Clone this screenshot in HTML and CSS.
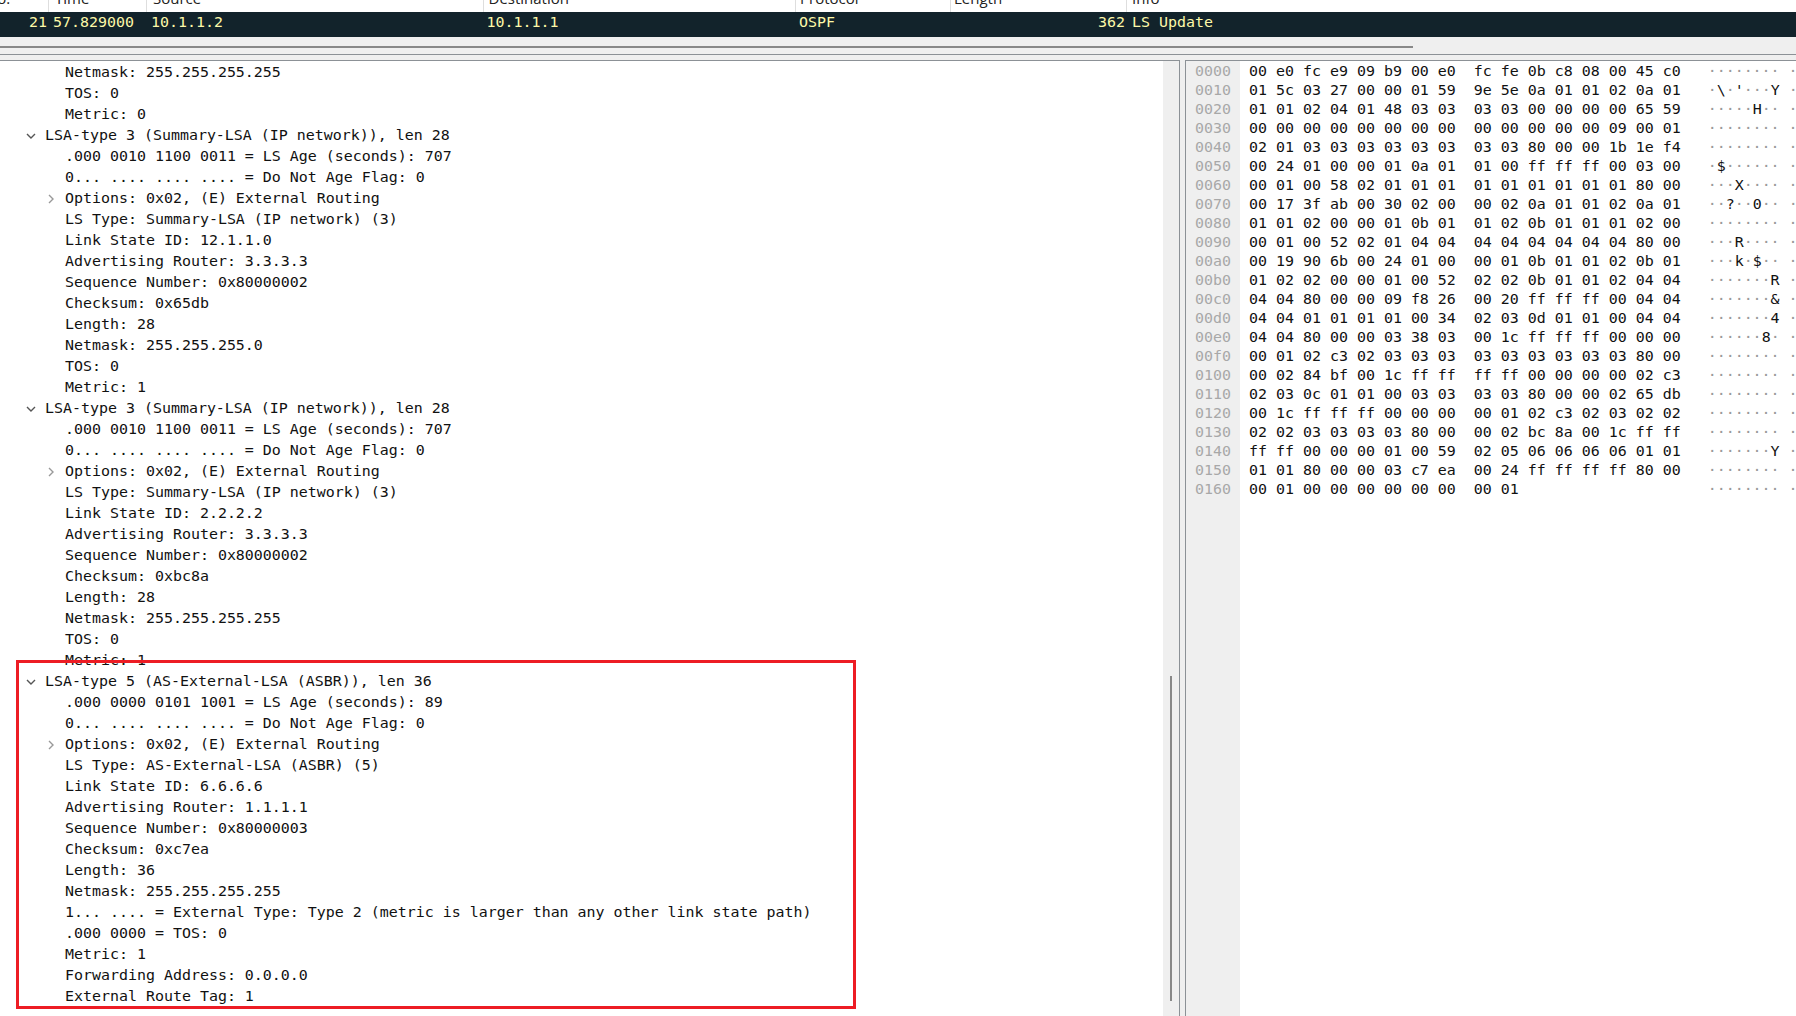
FILE: index.html
```html
<!DOCTYPE html>
<html lang="en">
<head>
<meta charset="utf-8">
<title>OSPF LS Update</title>
<link rel="stylesheet" href="styles.css">
</head>
<body>
<div class="app">
  <div class="cols head">
    <div class="hc no">No.</div>
    <div class="hc">Time</div>
    <div class="hc">Source</div>
    <div class="hc dst">Destination</div>
    <div class="hc proto">Protocol</div>
    <div class="hc len">Length</div>
    <div class="hc last">Info</div>
  </div>
  <div class="cols pkt">
    <div class="num">21</div>
    <div class="c-time">57.829000</div>
    <div class="c-src">10.1.1.2</div>
    <div class="c-dst">10.1.1.1</div>
    <div class="c-proto">OSPF</div>
    <div class="num">362</div>
    <div class="c-info">LS Update</div>
  </div>
  <div class="hbar"><div class="hthumb"></div></div>
  <div class="hbar2"></div>
  <div class="panes">
    <div class="left">
      <div class="tree">
        <div class="r">Netmask: 255.255.255.255</div>
        <div class="r">TOS: 0</div>
        <div class="r">Metric: 0</div>
        <div class="r h"><svg class="tw down" viewBox="0 0 10 6"><path d="M1 1l4 4 4-4"/></svg>LSA-type 3 (Summary-LSA (IP network)), len 28</div>
        <div class="r">.000 0010 1100 0011 = LS Age (seconds): 707</div>
        <div class="r">0... .... .... .... = Do Not Age Flag: 0</div>
        <div class="r h"><svg class="tw right" viewBox="0 0 6 10"><path d="M1 1l4 4-4 4"/></svg>Options: 0x02, (E) External Routing</div>
        <div class="r">LS Type: Summary-LSA (IP network) (3)</div>
        <div class="r">Link State ID: 12.1.1.0</div>
        <div class="r">Advertising Router: 3.3.3.3</div>
        <div class="r">Sequence Number: 0x80000002</div>
        <div class="r">Checksum: 0x65db</div>
        <div class="r">Length: 28</div>
        <div class="r">Netmask: 255.255.255.0</div>
        <div class="r">TOS: 0</div>
        <div class="r">Metric: 1</div>
        <div class="r h"><svg class="tw down" viewBox="0 0 10 6"><path d="M1 1l4 4 4-4"/></svg>LSA-type 3 (Summary-LSA (IP network)), len 28</div>
        <div class="r">.000 0010 1100 0011 = LS Age (seconds): 707</div>
        <div class="r">0... .... .... .... = Do Not Age Flag: 0</div>
        <div class="r h"><svg class="tw right" viewBox="0 0 6 10"><path d="M1 1l4 4-4 4"/></svg>Options: 0x02, (E) External Routing</div>
        <div class="r">LS Type: Summary-LSA (IP network) (3)</div>
        <div class="r">Link State ID: 2.2.2.2</div>
        <div class="r">Advertising Router: 3.3.3.3</div>
        <div class="r">Sequence Number: 0x80000002</div>
        <div class="r">Checksum: 0xbc8a</div>
        <div class="r">Length: 28</div>
        <div class="r">Netmask: 255.255.255.255</div>
        <div class="r">TOS: 0</div>
        <div class="r">Metric: 1</div>
        <div class="r h"><svg class="tw down" viewBox="0 0 10 6"><path d="M1 1l4 4 4-4"/></svg>LSA-type 5 (AS-External-LSA (ASBR)), len 36</div>
        <div class="r">.000 0000 0101 1001 = LS Age (seconds): 89</div>
        <div class="r">0... .... .... .... = Do Not Age Flag: 0</div>
        <div class="r h"><svg class="tw right" viewBox="0 0 6 10"><path d="M1 1l4 4-4 4"/></svg>Options: 0x02, (E) External Routing</div>
        <div class="r">LS Type: AS-External-LSA (ASBR) (5)</div>
        <div class="r">Link State ID: 6.6.6.6</div>
        <div class="r">Advertising Router: 1.1.1.1</div>
        <div class="r">Sequence Number: 0x80000003</div>
        <div class="r">Checksum: 0xc7ea</div>
        <div class="r">Length: 36</div>
        <div class="r">Netmask: 255.255.255.255</div>
        <div class="r">1... .... = External Type: Type 2 (metric is larger than any other link state path)</div>
        <div class="r">.000 0000 = TOS: 0</div>
        <div class="r">Metric: 1</div>
        <div class="r">Forwarding Address: 0.0.0.0</div>
        <div class="r">External Route Tag: 1</div>
      </div>
      <div class="vgutter"><div class="vthumb"></div></div>
    </div>
    <div class="right-pane">
      <div class="offs">
        <div>0000</div><div>0010</div><div>0020</div><div>0030</div><div>0040</div><div>0050</div><div>0060</div><div>0070</div><div>0080</div><div>0090</div><div>00a0</div><div>00b0</div><div>00c0</div><div>00d0</div><div>00e0</div><div>00f0</div><div>0100</div><div>0110</div><div>0120</div><div>0130</div><div>0140</div><div>0150</div><div>0160</div>
      </div>
      <div class="bytes">
        <div class="b">00 e0 fc e9 09 b9 00 e0  fc fe 0b c8 08 00 45 c0   <span class="d">········ ······</span>E<span class="d">·</span></div>
        <div class="b">01 5c 03 27 00 00 01 59  9e 5e 0a 01 01 02 0a 01   <span class="d">·</span>\<span class="d">·</span>'<span class="d">···</span>Y <span class="d">·</span>^<span class="d">······</span></div>
        <div class="b">01 01 02 04 01 48 03 03  03 03 00 00 00 00 65 59   <span class="d">·····</span>H<span class="d">·· ······</span>eY</div>
        <div class="b">00 00 00 00 00 00 00 00  00 00 00 00 00 09 00 01   <span class="d">········ ········</span></div>
        <div class="b">02 01 03 03 03 03 03 03  03 03 80 00 00 1b 1e f4   <span class="d">········ ········</span></div>
        <div class="b">00 24 01 00 00 01 0a 01  01 00 ff ff ff 00 03 00   <span class="d">·</span>$<span class="d">······ ········</span></div>
        <div class="b">00 01 00 58 02 01 01 01  01 01 01 01 01 01 80 00   <span class="d">···</span>X<span class="d">···· ········</span></div>
        <div class="b">00 17 3f ab 00 30 02 00  00 02 0a 01 01 02 0a 01   <span class="d">··</span>?<span class="d">··</span>0<span class="d">·· ········</span></div>
        <div class="b">01 01 02 00 00 01 0b 01  01 02 0b 01 01 01 02 00   <span class="d">········ ········</span></div>
        <div class="b">00 01 00 52 02 01 04 04  04 04 04 04 04 04 80 00   <span class="d">···</span>R<span class="d">···· ········</span></div>
        <div class="b">00 19 90 6b 00 24 01 00  00 01 0b 01 01 02 0b 01   <span class="d">···</span>k<span class="d">·</span>$<span class="d">·· ········</span></div>
        <div class="b">01 02 02 00 00 01 00 52  02 02 0b 01 01 02 04 04   <span class="d">·······</span>R <span class="d">········</span></div>
        <div class="b">04 04 80 00 00 09 f8 26  00 20 ff ff ff 00 04 04   <span class="d">·······</span>&amp; <span class="d">········</span></div>
        <div class="b">04 04 01 01 01 01 00 34  02 03 0d 01 01 00 04 04   <span class="d">·······</span>4 <span class="d">········</span></div>
        <div class="b">04 04 80 00 00 03 38 03  00 1c ff ff ff 00 00 00   <span class="d">······</span>8<span class="d">· ········</span></div>
        <div class="b">00 01 02 c3 02 03 03 03  03 03 03 03 03 03 80 00   <span class="d">········ ········</span></div>
        <div class="b">00 02 84 bf 00 1c ff ff  ff ff 00 00 00 00 02 c3   <span class="d">········ ········</span></div>
        <div class="b">02 03 0c 01 01 00 03 03  03 03 80 00 00 02 65 db   <span class="d">········ ······</span>e<span class="d">·</span></div>
        <div class="b">00 1c ff ff ff 00 00 00  00 01 02 c3 02 03 02 02   <span class="d">········ ········</span></div>
        <div class="b">02 02 03 03 03 03 80 00  00 02 bc 8a 00 1c ff ff   <span class="d">········ ········</span></div>
        <div class="b">ff ff 00 00 00 01 00 59  02 05 06 06 06 06 01 01   <span class="d">·······</span>Y <span class="d">········</span></div>
        <div class="b">01 01 80 00 00 03 c7 ea  00 24 ff ff ff ff 80 00   <span class="d">········ ·</span>$<span class="d">······</span></div>
        <div class="b">00 01 00 00 00 00 00 00  00 01                     <span class="d">········ ··</span></div>
      </div>
    </div>
  </div>
  <div class="redbox"></div>
</div>
</body>
</html>
```
FILE: styles.css
```css
* { box-sizing: border-box; }
html, body { margin: 0; padding: 0; background: #fff; }
body { width: 1796px; height: 1016px; overflow: hidden; }
.app {
  position: relative;
  width: 1796px;
  height: 1016px;
  display: flex;
  flex-direction: column;
  overflow: hidden;
  font-family: "DejaVu Sans Mono", monospace;
  font-size: 14.95px;
  color: #111;
}
.cols {
  display: grid;
  grid-template-columns: 49px 98px 336.5px 312.5px 155px 176px 1fr;
  flex: none;
}
.head {
  height: 12px;
  overflow: hidden;
  background: #fff;
  font-family: "Open Sans", sans-serif;
  font-size: 15px;
  color: #222;
}
.hc {
  height: 12px;
  display: flex;
  align-items: flex-end;
  padding: 0 0 4px 6px;
  line-height: 20px;
  border-right: 1px solid #dedede;
  white-space: nowrap;
}
.hc.no { padding-left: 0; text-indent: -14px; }
.hc.dst { padding-left: 5px; }
.hc.proto { padding-left: 4px; }
.hc.len { padding-left: 3px; }
.hc.last { border-right: 0; padding-left: 5px; }
.pkt {
  height: 25px;
  background: #12232b;
  color: #fdf8a8;
  line-height: 21px;
  white-space: pre;
}
.num { text-align: right; padding-right: 2px; }
.c-time { padding-left: 4px; }
.c-src { padding-left: 4px; }
.c-dst { padding-left: 3px; }
.c-proto { padding-left: 3px; }
.c-info { padding-left: 5px; }
.hbar {
  flex: none;
  height: 17px;
  padding-top: 9px;
  background: #efefef;
}
.hthumb { width: 1413px; height: 2px; background: #888; }
.hbar2 {
  flex: none;
  height: 6px;
  background: #efefef;
  border-top: 1px solid #8c9196;
}
.panes {
  flex: 1;
  min-height: 0;
  display: flex;
  background: #efefef;
}
.left {
  width: 1180px;
  flex: none;
  display: flex;
  border-top: 1px solid #8c9196;
  border-right: 1px solid #8c9196;
  overflow: hidden;
}
.tree {
  flex: 1;
  background: #fff;
  padding-top: 1px;
  line-height: 21px;
  overflow: hidden;
}
.r { height: 21px; padding-left: 65px; white-space: pre; }
.r.h { display: flex; align-items: center; padding-left: 0; }
.tw { fill: none; stroke-width: 1.4; flex: none; }
.tw.down { width: 10px; height: 6px; margin: 0 9px 0 26px; stroke: #555; }
.tw.right { width: 6px; height: 10px; margin: 0 11px 0 48px; stroke: #999; }
.vgutter {
  width: 16px;
  flex: none;
  background: #efefef;
  padding: 615px 0 0 7px;
}
.vthumb { width: 2px; height: 325px; background: #888; }
.right-pane {
  margin-left: 5px;
  flex: 1;
  min-width: 0;
  display: flex;
  background: #fff;
  border-top: 1px solid #8c9196;
  border-left: 1px solid #8c9196;
  line-height: 19px;
  overflow: hidden;
}
.offs {
  width: 54px;
  flex: none;
  background: #efefef;
  color: #a8a8a8;
  padding: 1px 0 0 9px;
}
.bytes { padding: 1px 0 0 9px; }
.b { height: 19px; white-space: pre; }
.d { color: #999; }
.redbox {
  position: absolute;
  left: 16px;
  top: 660px;
  width: 840px;
  height: 349px;
  border: 3px solid #ed1c24;
  pointer-events: none;
}
```
